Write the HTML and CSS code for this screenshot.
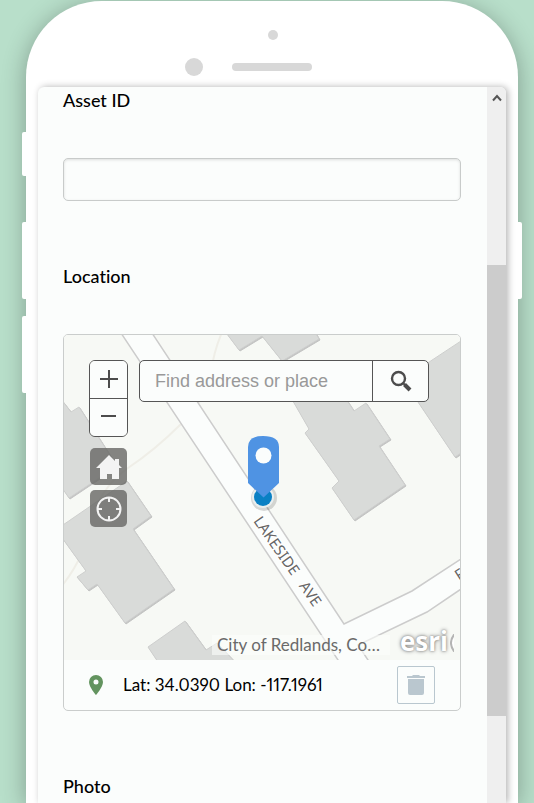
FILE: index.html
```html
<!DOCTYPE html>
<html lang="en">
<head>
  <meta charset="UTF-8">
  <meta name="viewport" content="width=device-width, initial-scale=1.0">
  <title>Asset Survey</title>
  <link rel="stylesheet" href="styles.css">
</head>
<body>
  <div class="phone">
    <span class="key key-mute"></span>
    <span class="key key-up"></span>
    <span class="key key-down"></span>
    <span class="key key-power"></span>

    <div class="phone-top">
      <svg class="sensors" width="158" height="87" viewBox="0 0 158 87" fill="#d8d8d8">
        <circle cx="88" cy="34" r="5"/>
        <circle cx="9" cy="66" r="9"/>
        <rect x="47" y="62" width="80" height="8" rx="4"/>
      </svg>
    </div>

    <div class="screen">
      <form class="survey">
        <div class="field">
          <label class="field-label" for="asset-id">Asset ID</label>
          <input class="text-input" type="text" id="asset-id">
        </div>

        <div class="field">
          <label class="field-label" for="address">Location</label>
          <div class="geopoint">
            <div class="map">
              <svg class="basemap" viewBox="64 335 396 325" preserveAspectRatio="xMidYMid slice">
                <rect x="0" y="300" width="600" height="400" fill="#f7f9f5"/>
                <!-- contours -->
                <path class="contour" d="M223 330Q214 350 211 372Q206 400 181 424Q155 450 128 468Q100 488 92 520Q84 560 60 588"/>
                <!-- roads -->
                <path class="road" d="M119 330L340 663H370L358 645L427 612L470 583V553L412 591L344 624L150 330Z"/>
                <!-- buildings -->
                <g class="building-shade" transform="translate(1 1)">
                  <path d="M224 330L239 350L262 336L282 361L319 339L314 330Z"/>
                  <path d="M290 396L309 429L305 433L339 481L332 488L354 520L405 485L379 446L390 439L366 403L354 411L344 396Z"/>
                  <path d="M414 372L464 339V451L455 457L418 402Z"/>
                  <path d="M60 398L71 412L79 407L117 466L69 498L60 485Z"/>
                  <path d="M60 527L127 481L151 516L133 529L174 589L125 623L97 584L88 590L77 577L86 571L60 535Z"/>
                  <path d="M160 665L148 647L185 621L206 650L217 643L238 665Z"/>
                </g>
                <g class="building">
                  <path d="M224 330L239 350L262 336L282 361L319 339L314 330Z"/>
                  <path d="M290 396L309 429L305 433L339 481L332 488L354 520L405 485L379 446L390 439L366 403L354 411L344 396Z"/>
                  <path d="M414 372L464 339V451L455 457L418 402Z"/>
                  <path d="M60 398L71 412L79 407L117 466L69 498L60 485Z"/>
                  <path d="M60 527L127 481L151 516L133 529L174 589L125 623L97 584L88 590L77 577L86 571L60 535Z"/>
                  <path d="M160 665L148 647L185 621L206 650L217 643L238 665Z"/>
                </g>
                <text class="street" transform="translate(253 521) rotate(55)">LAKESIDE &#160;&#160;AVE</text>
                <text class="street" transform="translate(459 581) rotate(-33)">F</text>
                <!-- current position and pin -->
                <circle cx="264" cy="498" r="13" fill="#000" opacity=".15"/>
                <circle cx="263" cy="497" r="11" fill="#e9eeee"/>
                <circle cx="263" cy="497" r="9" fill="#0a80c4"/>
                <path d="M248 447Q248 436 263 436Q279 436 279 447V483L263.500 497.500L248 483Z" fill="#4f93e3"/>
                <circle cx="263.500" cy="455.500" r="8" fill="#fbfdfc"/>
              </svg>

              <div class="map-tools">
                <div class="map-buttons">
                  <div class="zoom">
                    <button type="button" class="zoom-button" aria-label="Zoom in">
                      <svg width="20" height="20" viewBox="0 0 20 20"><path d="M1 9H19M10 0V18" stroke="#4c4c4c" stroke-width="2"/></svg>
                    </button>
                    <button type="button" class="zoom-button" aria-label="Zoom out">
                      <svg width="20" height="20" viewBox="0 0 20 20"><path d="M2 8H17" stroke="#4c4c4c" stroke-width="2"/></svg>
                    </button>
                  </div>
                  <button type="button" class="dark-button" aria-label="Default extent">
                    <svg width="26" height="26" viewBox="0 0 26 26" fill="#f3f3f3"><path d="M13 1L19 7V5H23V11L26 14H23V25H16V20H11V25H4V14H0Z"/></svg>
                  </button>
                  <button type="button" class="dark-button" aria-label="Find my location">
                    <svg width="26" height="26" viewBox="0 0 26 26" fill="none" stroke="#f3f3f3" stroke-width="2"><circle cx="13" cy="13" r="11.500"/><path d="M13 1V6M13 20V25M1 13H6M20 13H25"/></svg>
                  </button>
                </div>
                <div class="search">
                  <input class="search-input" type="text" id="address" placeholder="Find address or place">
                  <button type="button" class="search-button" aria-label="Search">
                    <svg width="22" height="22" viewBox="0 0 22 22" fill="none" stroke="#4c4c4c"><circle cx="8.500" cy="8.500" r="6.500" stroke-width="2.400"/><path d="M13 13L15 15" stroke-width="2"/><path d="M14.500 14.500L20 20" stroke-width="4"/></svg>
                  </button>
                </div>
              </div>

              <div class="map-credits">
                <span class="attribution">City of Redlands, Co…</span>
                <span class="esri-logo">esri</span>
                <svg class="esri-globe" width="4" height="18" viewBox="0 0 4 18" fill="none"><path d="M5 1Q-1 9 5 17" stroke="#b4b4b4" stroke-width="4"/><path d="M5 3Q1 9 5 15" stroke="#fff" stroke-width="2"/></svg>
              </div>
            </div>

            <div class="coords">
              <svg class="marker" width="14" height="20" viewBox="0 0 14 20"><path fill="#63945f" fill-rule="evenodd" d="M7 0A7 7 0 0 0 0 7C0 12 7 20 7 20S14 12 14 7A7 7 0 0 0 7 0ZM7 4.500A2.500 2.500 0 1 1 7 9.500A2.500 2.500 0 1 1 7 4.500Z"/></svg>
              <span class="coords-text">Lat: 34.0390 Lon: -117.1961</span>
              <button type="button" class="trash" aria-label="Clear location">
                <svg width="18" height="20" viewBox="0 0 18 20" fill="#bac7cf"><path d="M0 1H5L6 0H12L13 1H18V3H0ZM1 4H17V18Q17 20 15 20H3Q1 20 1 18Z"/></svg>
              </button>
            </div>
          </div>
        </div>

        <div class="field">
          <label class="field-label" for="photo">Photo</label>
          <input class="photo-input" type="file" id="photo">
        </div>
      </form>

      <div class="scrollbar">
        <button type="button" class="scroll-up" aria-label="Scroll up">
          <svg width="10" height="8" viewBox="0 0 10 8" fill="none" stroke="#555" stroke-width="2"><path d="M1 6.500L5 2L9 6.500"/></svg>
        </button>
        <div class="scroll-track"></div>
        <div class="scroll-thumb"></div>
        <div class="scroll-rest"></div>
      </div>
    </div>
  </div>
</body>
</html>
```
FILE: styles.css
```css
* {
  box-sizing: border-box;
}
html {
  background: #b8dfca;
}
body {
  margin: 0;
  height: 100vh;
  overflow: hidden;
  font-family: Lato, "Noto Sans", sans-serif;
  font-size: 17px;
  line-height: 24px;
  font-variant-ligatures: none;
  color: #000;
}
button, input {
  margin: 0;
  padding: 0;
  border: 0;
  font: inherit;
}
button {
  display: flex;
  align-items: center;
  justify-content: center;
  cursor: pointer;
}

/* phone */
.phone {
  position: relative;
  margin: 1px 16px 0 26px;
  padding: 0 12px;
  background: #fff;
  border-radius: 76px 76px 0 0;
  box-shadow: 0 4px 24px rgba(0, 0, 0, 0.3);
}
.key {
  position: absolute;
  left: -4px;
  width: 4px;
  height: 77px;
  background: #fff;
  border-radius: 2px 0 0 2px;
}
.key-mute {
  top: 131px;
  height: 44px;
}
.key-up {
  top: 221px;
}
.key-down {
  top: 315px;
}
.key-power {
  top: 221px;
  left: auto;
  right: -4px;
  border-radius: 0 2px 2px 0;
}
.phone-top {
  display: flex;
  justify-content: center;
  height: 86px;
}
.sensors {
  margin-right: 16px;
}

/* screen */
.screen {
  display: flex;
  height: calc(100vh - 87px);
  background: #fbfdfc;
  border-radius: 6px 6px 0 0;
  box-shadow: 2px 0 7px rgba(0, 0, 0, 0.3);
  overflow: hidden;
}
.survey {
  flex: 1;
  min-width: 0;
  padding: 2px 26px 0 25px;
}
.field {
  margin-bottom: 64px;
}
.field-label {
  display: block;
  margin-bottom: 47px;
  font-size: 18px;
  font-weight: 500;
  line-height: 22px;
}
.text-input {
  display: block;
  width: 100%;
  height: 43px;
  padding: 0 12px;
  background: #fbfdfc;
  border: 1px solid #c8cbca;
  border-radius: 5px;
  box-shadow: inset 0 1px 3px rgba(0, 0, 0, 0.12);
}
.photo-input {
  width: 100%;
}

/* map */
.geopoint {
  border: 1px solid #cacdcc;
  border-radius: 5px;
  overflow: hidden;
}
.map {
  position: relative;
  display: flex;
  flex-direction: column;
  justify-content: space-between;
  height: 325px;
}
.basemap {
  position: absolute;
  top: 0;
  left: 0;
  width: 100%;
  height: 100%;
}
.contour {
  fill: none;
  stroke: #efeee7;
  stroke-width: 2;
}
.road {
  fill: #fbfdfc;
  stroke: #cccccc;
  stroke-width: 1.5;
}
.building {
  fill: #d9dbd9;
  stroke: #cecfce;
}
.building-shade {
  fill: #c3c4c3;
  stroke: #c3c4c3;
}
.street {
  font-family: "Noto Sans", sans-serif;
  font-size: 15px;
  fill: #666;
  stroke: #fff;
  stroke-width: 2px;
  paint-order: stroke;
}
.map-tools {
  position: relative;
  display: flex;
  gap: 11px;
  padding: 25px 31px 0 25px;
}
.map-buttons {
  display: flex;
  flex-direction: column;
  align-items: center;
  gap: 5px;
}
.zoom {
  margin-bottom: 6px;
  border: 1px solid #555;
  border-radius: 6px;
  overflow: hidden;
}
.zoom-button {
  width: 37px;
  height: 37px;
  background: #fbfdfc;
}
.zoom-button + .zoom-button {
  height: 38px;
  border-top: 1px solid #555;
}
.dark-button {
  width: 37px;
  height: 37px;
  background: rgba(102, 102, 100, 0.8);
  border-radius: 5px;
}
.search {
  flex: 1;
  display: flex;
  height: 42px;
  min-width: 0;
  background: #fbfdfc;
  border: 1px solid #555;
  border-radius: 5px;
  overflow: hidden;
}
.search-input {
  flex: 1;
  min-width: 0;
  padding: 0 15px;
  background: transparent;
  font-family: "Liberation Sans", Arial, sans-serif;
  font-size: 18px;
}
.search-input::placeholder {
  color: #999;
}
.search-button {
  width: 56px;
  background: transparent;
  border-left: 1px solid #555;
}
.map-credits {
  position: relative;
  display: flex;
  justify-content: flex-end;
  align-items: flex-end;
  padding: 0 6px 5px 0;
}
.attribution {
  width: 178px;
  margin-right: 10px;
  padding: 0 5px;
  background: rgba(251, 253, 252, 0.6);
  color: #6a6a6a;
  line-height: 20px;
  white-space: nowrap;
}
.esri-logo {
  width: 50px;
  font-family: "Open Sans", sans-serif;
  font-size: 26px;
  font-weight: 700;
  line-height: 28px;
  color: #fff;
  text-shadow: 0 0 2px #888, 0 0 4px #888;
}
.esri-globe {
  margin-bottom: 3px;
}

/* coordinates */
.coords {
  display: flex;
  align-items: center;
  height: 50px;
  padding: 0 25px;
}
.marker {
  margin-right: 20px;
}
.coords-text {
  flex: 1;
  font-variant-numeric: proportional-nums;
}
.trash {
  width: 38px;
  height: 38px;
  background: #fbfdfc;
  border: 1px solid #b9c7cf;
  border-radius: 2px;
}

/* scrollbar */
.scrollbar {
  display: flex;
  flex-direction: column;
  width: 19px;
  background: #efefef;
}
.scroll-up {
  height: 22px;
  background: transparent;
}
.scroll-track {
  flex: 156;
}
.scroll-thumb {
  flex: 451;
  background: #cccccc;
}
.scroll-rest {
  flex: 87;
}
```
